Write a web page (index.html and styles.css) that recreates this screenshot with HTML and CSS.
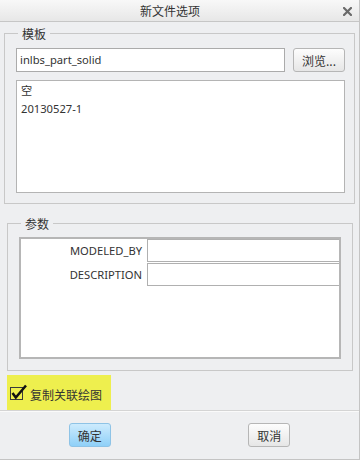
FILE: index.html
```html
<!DOCTYPE html>
<html lang="zh-CN">
<head>
  <meta charset="UTF-8" />
  <title>新文件选项</title>
  <link rel="stylesheet" href="styles.css">
</head>
<body>
  <div class="window">
    <!-- Title bar -->
    <div class="titlebar">
      <span class="title">新文件选项</span>
      <svg class="close" width="9" height="9" viewBox="0 0 9 9">
        <path d="M1 1 L8 8 M8 1 L1 8" stroke="#6a6a6a" stroke-width="2.2" stroke-linecap="square" />
      </svg>
    </div>

    <!-- Template group -->
    <fieldset class="group group-template">
      <legend>模板</legend>
      <div class="template-row">
        <div class="text-input">inlbs_part_solid</div>
        <button class="btn">浏览...</button>
      </div>
      <div class="listbox">
        <div class="list-item">空</div>
        <div class="list-item">20130527-1</div>
      </div>
    </fieldset>

    <!-- Parameters group -->
    <fieldset class="group group-params">
      <legend>参数</legend>
      <div class="param-table">
        <div class="param-row">
          <div class="param-name">MODELED_BY</div>
          <div class="param-value"></div>
        </div>
        <div class="param-row">
          <div class="param-name">DESCRIPTION</div>
          <div class="param-value"></div>
        </div>
      </div>
    </fieldset>

    <div class="option">
      <svg class="check" width="18" height="18" viewBox="0 0 18 18">
        <rect x="0.5" y="4.5" width="12" height="12" fill="none" stroke="#3a3a3a" />
        <path d="M2.5 10 L5.8 14.5 L16 2.5" fill="none" stroke="#111" stroke-width="2.5" />
      </svg>
      <span>复制关联绘图</span>
    </div>

    <div class="footer">
      <div class="footer-half"><button class="btn btn-primary">确定</button></div>
      <div class="footer-half"><button class="btn">取消</button></div>
    </div>
  </div>
</body>
</html>
```

FILE: styles.css
```css
body {
  margin: 0;
  background: #fff;
  font-family: 'Noto Sans', 'Noto Sans CJK SC', sans-serif;
  font-size: 12px;
  color: #333;
}
.window {
  width: 360px;
  height: 460px;
  box-sizing: border-box;
  background: #eeeff1;
  border-right: 1px solid #c4c4c4;
  border-bottom: 1px solid #c4c4c4;
  display: flex;
  flex-direction: column;
}
.titlebar {
  height: 21px;
  flex-shrink: 0;
  border-bottom: 1px solid #c6c6c6;
  background: linear-gradient(#f8f8f8, #e7e7e7);
  display: flex;
  align-items: center;
  justify-content: center;
  padding-right: 19px;
  position: relative;
}
.title {
  font-family: 'Noto Sans CJK SC', sans-serif;
  font-size: 12px;
  color: #333;
  line-height: 21px;
}
.close {
  position: absolute;
  right: 7px;
  top: 7px;
}
.group {
  min-width: 0;
  border: 1px solid #c8c8c8;
  padding: 7px 9px 10px 11px;
}
.group legend {
  font-family: 'Noto Sans CJK SC', sans-serif;
  font-size: 12px;
  line-height: 15px;
  padding: 0 4px;
  margin-left: 2px;
}
.group-template {
  margin: 4px 4px 0 4px;
}
.group-params {
  margin: 12px 6px 0 7px;
  padding: 6px 11px 11px 11px;
}
.template-row {
  display: flex;
  gap: 8px;
}
.text-input {
  width: 269px;
  height: 24px;
  box-sizing: border-box;
  background: #fff;
  border: 1px solid #ababab;
  padding-left: 3px;
  line-height: 22px;
  font-size: 11.2px;
}
.btn {
  height: 24px;
  box-sizing: border-box;
  border: 1px solid #b6b6b6;
  border-radius: 3px;
  background: linear-gradient(#fdfdfd, #e6e6e6);
  font-family: 'Noto Sans CJK SC', sans-serif;
  font-size: 12px;
  color: #333;
  padding: 0;
  width: 42px;
}
.template-row .btn {
  width: 52px;
}
.btn-primary {
  border-color: #8ec3e6;
  background: linear-gradient(#cdebfd, #8fd0f8);
}
.listbox {
  margin-top: 8px;
  height: 113px;
  box-sizing: border-box;
  background: #fff;
  border: 1px solid #b4b4b4;
  padding: 1px 4px;
}
.list-item {
  line-height: 18px;
  font-size: 11.2px;
}
.param-table {
  height: 122px;
  box-sizing: border-box;
  background: #fff;
  border: 2px solid #b6b6b6;
  display: flex;
  flex-direction: column;
  gap: 1px;
}
.param-row {
  display: grid;
  grid-template-columns: 126px 1fr;
  height: 23px;
}
.param-name {
  text-align: right;
  padding-right: 5px;
  line-height: 23px;
  font-size: 11.2px;
}
.param-value {
  border: 1px solid #b0b0b0;
  border-right: none;
}
.option {
  margin: 4px 0 0 7px;
  width: 104px;
  height: 35px;
  box-sizing: border-box;
  background: #eeef4e;
  display: flex;
  align-items: center;
  padding: 4px 0 0 3px;
  gap: 2px;
  font-family: 'Noto Sans CJK SC', sans-serif;
}
.check {
  margin-top: -5px;
}
.footer {
  flex: 1;
  border-top: 1px solid #d4d4d4;
  box-shadow: inset 0 1px 0 #fafafa;
  display: flex;
  padding-top: 12px;
}
.footer-half {
  flex: 1;
  display: flex;
  justify-content: center;
}
```
